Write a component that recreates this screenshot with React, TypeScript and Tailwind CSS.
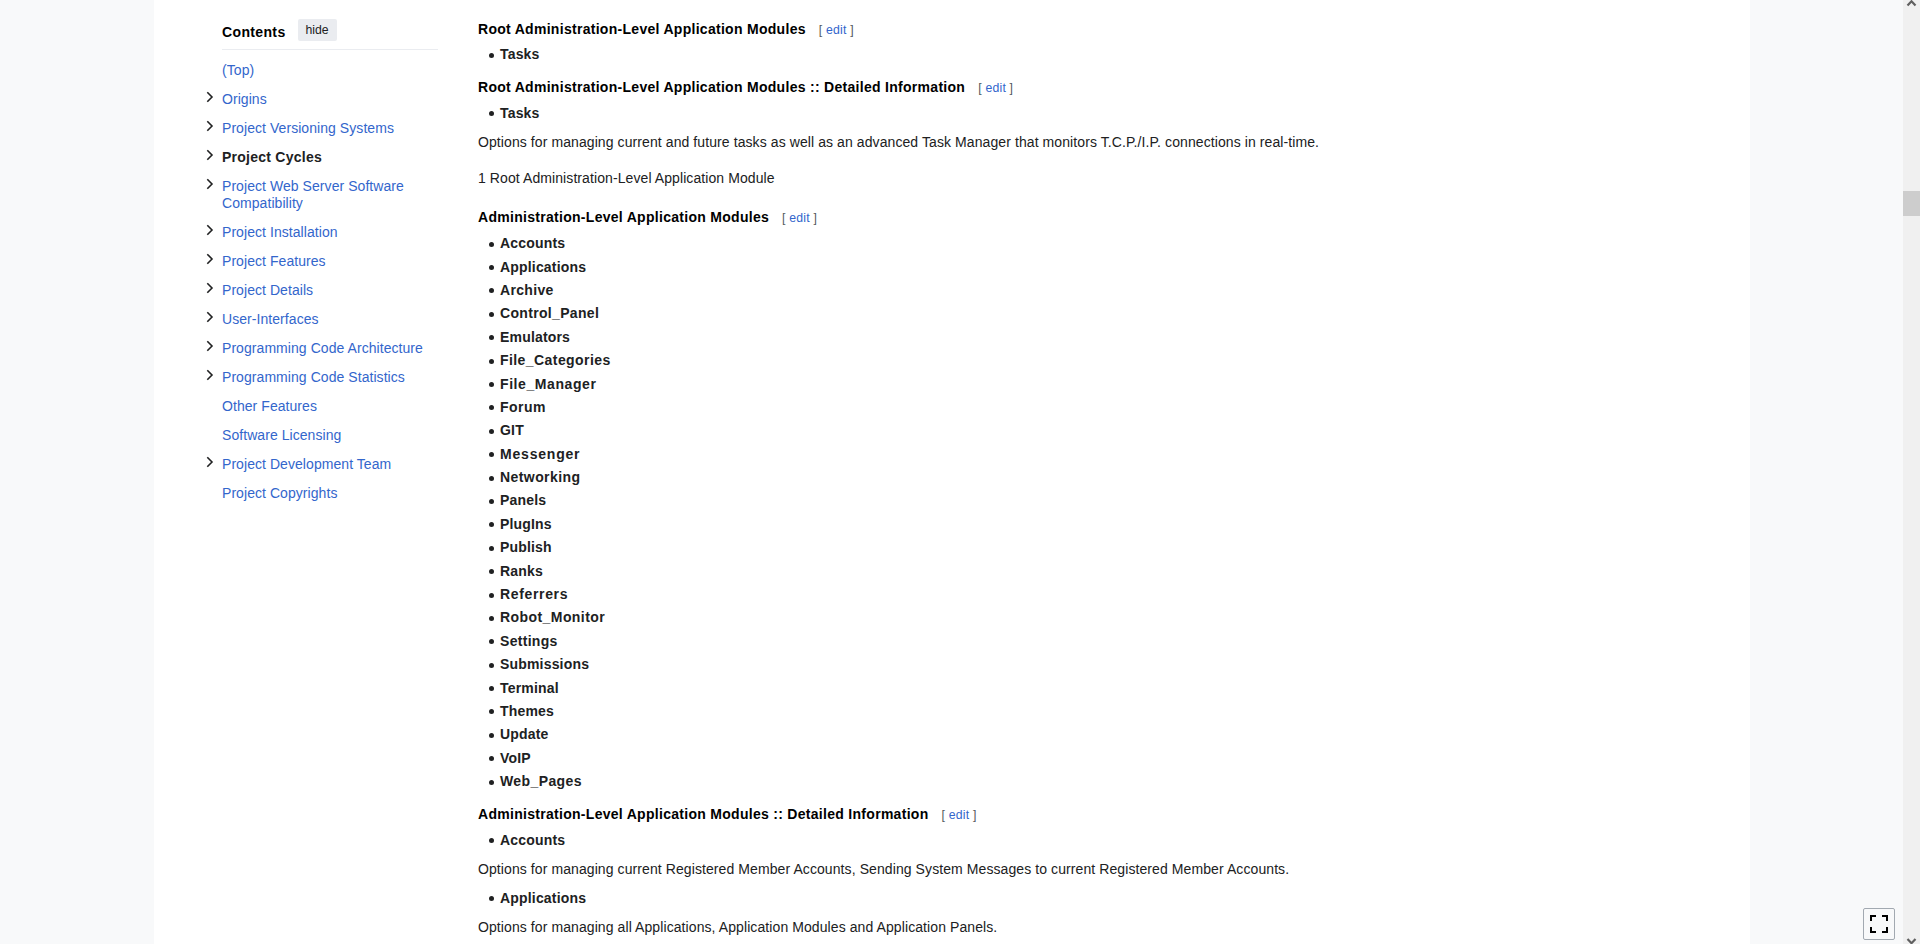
type TocItem = { label: string; expandable?: boolean; active?: boolean };

const toc: TocItem[] = [
  { label: '(Top)' },
  { label: 'Origins', expandable: true },
  { label: 'Project Versioning Systems', expandable: true },
  { label: 'Project Cycles', expandable: true, active: true },
  { label: 'Project Web Server Software Compatibility', expandable: true },
  { label: 'Project Installation', expandable: true },
  { label: 'Project Features', expandable: true },
  { label: 'Project Details', expandable: true },
  { label: 'User-Interfaces', expandable: true },
  { label: 'Programming Code Architecture', expandable: true },
  { label: 'Programming Code Statistics', expandable: true },
  { label: 'Other Features' },
  { label: 'Software Licensing' },
  { label: 'Project Development Team', expandable: true },
  { label: 'Project Copyrights' },
];

const modules = [
  'Accounts', 'Applications', 'Archive', 'Control_Panel', 'Emulators', 'File_Categories',
  'File_Manager', 'Forum', 'GIT', 'Messenger', 'Networking', 'Panels', 'PlugIns', 'Publish',
  'Ranks', 'Referrers', 'Robot_Monitor', 'Settings', 'Submissions', 'Terminal', 'Themes',
  'Update', 'VoIP', 'Web_Pages',
];

const wideTracking: Record<string, string> = {
  Archive: 'tracking-[0.32px]',
  Control_Panel: 'tracking-[0.33px]',
  File_Categories: 'tracking-[0.43px]',
  File_Manager: 'tracking-[0.58px]',
  Forum: 'tracking-[0.45px]',
  Messenger: 'tracking-[0.8px]',
  Networking: 'tracking-[0.42px]',
  Referrers: 'tracking-[0.65px]',
  Robot_Monitor: 'tracking-[0.43px]',
  Settings: 'tracking-[0.3px]',
  Web_Pages: 'tracking-[0.4px]',
};

function Heading({ children, className = '' }: { children: string; className?: string }) {
  return (
    <h4 className={`flex h-[22px] items-baseline leading-[22px] font-bold text-black ${className}`}>
      <span className="tracking-[0.29px]">{children}</span>
      <span className="ml-[13px] text-[12.25px] font-normal tracking-[0.2px] text-[#54595d]">
        [ <a className="text-[#3366cc]">edit</a> ]
      </span>
    </h4>
  );
}

function ModuleList({ items, className = '' }: { items: string[]; className?: string }) {
  return (
    <ul className={`flex flex-col pl-[11px] ${className}`}>
      {items.map((item) => (
        <li key={item} className="mb-[1.4px] flex h-[22px] items-center leading-[22px] font-bold">
          <span className="mt-[2px] mr-[6px] size-[5px] rounded-full bg-[#202122]" />
          <span className={wideTracking[item] ?? 'tracking-[0.18px]'}>{item}</span>
        </li>
      ))}
    </ul>
  );
}

function Contents() {
  return (
    <nav className="w-[232px] pt-[19px]">
      <div className="ml-4 flex h-[31px] items-start border-b border-[#eaecf0]">
        <h2 className="mt-[2px] leading-[22px] font-bold tracking-[0.36px] text-black">Contents</h2>
        <button className="ml-[12px] h-[22px] w-[39px] rounded-[2px] bg-[#eaecf0] text-[12.25px] leading-[22px]">
          hide
        </button>
      </div>
      <ul className="mt-[6px]">
        {toc.map((item) => (
          <li key={item.label} className="flex py-[6px] leading-[17px]">
            <span className="w-4 shrink-0">
              {item.expandable && (
                <svg width="8" height="12" viewBox="0 0 8 12" fill="none" stroke="#202122" strokeWidth="1.6">
                  <path d="M1.3 1.2 6 6 1.3 10.8" />
                </svg>
              )}
            </span>
            <a className={item.active ? 'font-bold tracking-[0.25px] text-[#202122]' : 'tracking-[0.06px] text-[#3366cc]'}>
              {item.label}
            </a>
          </li>
        ))}
      </ul>
    </nav>
  );
}

function Article() {
  return (
    <main className="ml-10 w-[1200px] pt-[18px] leading-[22px] tracking-[0.088px]">
      <Heading>Root Administration-Level Application Modules</Heading>
      <ModuleList items={['Tasks']} className="mt-[3px]" />
      <Heading className="mt-[9.6px]">Root Administration-Level Application Modules :: Detailed Information</Heading>
      <ModuleList items={['Tasks']} className="mt-[4px]" />
      <p className="mt-[5.6px]">
        Options for managing current and future tasks as well as an advanced Task Manager that monitors T.C.P./I.P. connections in real-time.
      </p>
      <p className="mt-[14px]">1 Root Administration-Level Application Module</p>
      <Heading className="mt-[17px]">Administration-Level Application Modules</Heading>
      <ModuleList items={modules} className="mt-[4.2px]" />
      <Heading className="mt-[9.2px]">Administration-Level Application Modules :: Detailed Information</Heading>
      <ModuleList items={['Accounts']} className="mt-[4px]" />
      <p className="mt-[5.6px]">
        Options for managing current Registered Member Accounts, Sending System Messages to current Registered Member Accounts.
      </p>
      <ModuleList items={['Applications']} className="mt-[7px]" />
      <p className="mt-[5.6px]">Options for managing all Applications, Application Modules and Application Panels.</p>
    </main>
  );
}

function Scrollbar() {
  return (
    <div className="flex w-[17px] flex-col bg-[#f0f0f0]">
      <svg width="17" height="8" viewBox="0 0 17 8" fill="none" stroke="#606060" strokeWidth="2.2">
        <path d="M4.5 5.5 8.5 1.3 12.5 5.5" />
      </svg>
      <div className="mt-[183px] h-[25px] bg-[#cdcdcd]" />
      <svg className="mt-auto" width="17" height="8" viewBox="0 0 17 8" fill="none" stroke="#606060" strokeWidth="2.2">
        <path d="M4.5 3 8.5 7.2 12.5 3" />
      </svg>
    </div>
  );
}

export default function App() {
  return (
    <div className="flex h-[944px] w-[1920px] overflow-hidden bg-[#f8f9fa] font-['Liberation_Sans',Arial,sans-serif] text-[14px] text-[#202122]">
      <div className="ml-[154px] flex w-[1596px] bg-white pl-[52px]">
        <Contents />
        <Article />
      </div>
      <div className="flex flex-1 items-end justify-end pr-2 pb-1">
        <button className="flex size-8 items-center justify-center rounded-[2px] border border-[#a2a9b1] bg-[#f8f9fa]">
          <svg width="20" height="20" viewBox="0 0 20 20" fill="#000">
            <path d="M1 1v6h2V3h4V1zm2 12H1v6h6v-2H3zm14 4h-4v2h6v-6h-2zm0-16h-4v2h4v4h2V1z" />
          </svg>
        </button>
      </div>
      <Scrollbar />
    </div>
  );
}
